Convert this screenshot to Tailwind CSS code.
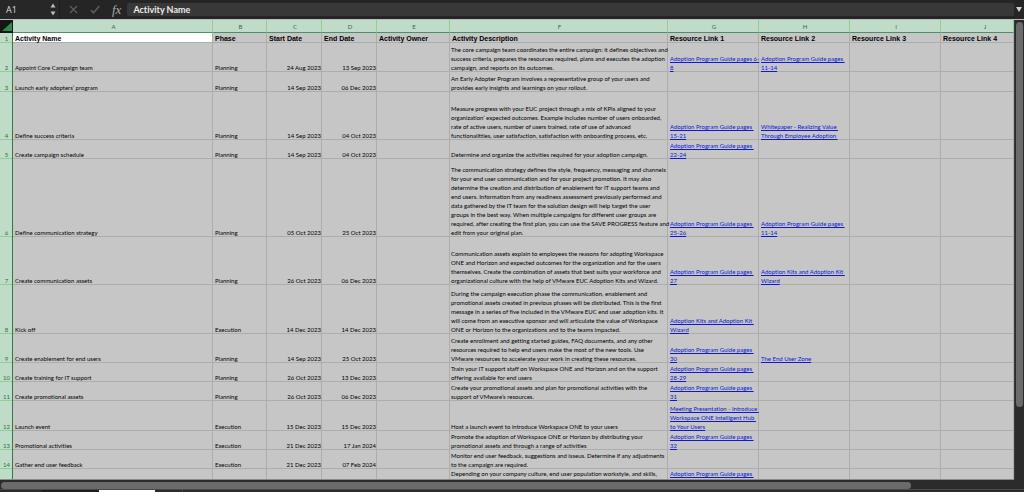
<!DOCTYPE html>
<html lang="en">
<head>
<meta charset="utf-8">
<title>Adoption campaign plan</title>
<script src="https://cdn.jsdelivr.net/npm/@tailwindcss/browser@4"></script>
</head>
<body class="flex h-screen flex-col overflow-hidden bg-[#2b2b2b] font-['Lato',sans-serif]">

<!-- Formula bar -->
<header class="flex h-[19px] shrink-0 items-center bg-[#252525]">
  <div class="flex h-full w-[60px] shrink-0 items-center justify-between border-r border-[#1d1d1d] bg-[#272727] pr-[3px] pl-1.5">
    <input aria-label="Name box" value="A1" class="h-4 w-9 bg-transparent font-['Open_Sans',sans-serif] text-[9px] text-[#dedede] outline-none">
    <button aria-label="Named ranges" class="flex h-full items-center">
      <svg class="h-[13px] w-[6px]" viewBox="0 0 6 13" fill="#bdbdbd"><path d="M3 0.5 5.5 4.5H.5ZM3 12.5 5.5 8.5H.5Z"/></svg>
    </button>
  </div>
  <div class="flex shrink-0 items-center gap-3 pr-1 pl-[9px]">
    <button aria-label="Cancel"><svg class="size-[9px]" viewBox="0 0 9 9" fill="none" stroke="#5e5e5e" stroke-width="1.3"><path d="m1 1 7 7M8 1 1 8"/></svg></button>
    <button aria-label="Enter"><svg class="h-[9px] w-[10px]" viewBox="0 0 10 9" fill="none" stroke="#5e5e5e" stroke-width="1.5"><path d="m.8 5 2.7 2.8L9.3 1"/></svg></button>
    <button aria-label="Insert function" class="font-['Liberation_Serif',serif] text-[13px] leading-4 text-[#a8a8a8] italic">fx</button>
  </div>
  <input aria-label="Formula" value="Activity Name" class="ml-0.5 h-[13px] min-w-0 flex-1 rounded-xs bg-[#383838] px-1.5 text-[9px] font-bold text-[#ececec] outline-none [font-variant-ligatures:none]">
  <button aria-label="Expand formula bar" class="flex w-2.5 shrink-0 items-center justify-center">
    <svg class="h-[5px] w-[6px]" viewBox="0 0 6 5" fill="#d0d0d0"><path d="M0 0H6L3 5Z"/></svg>
  </button>
</header>
<div class="h-px shrink-0 bg-[#bcbcbc]"></div>

<!-- Sheet -->
<main class="flex min-h-0 flex-1">
  <div class="min-w-0 flex-1 overflow-hidden border-b border-[#8a8a8a] bg-[#c6c6c6]">
    <table class="w-full table-fixed border-separate border-spacing-0 text-[6px] leading-[9px] text-black [font-variant-ligatures:none]">
      <colgroup>
        <col class="w-[13px]"><col class="w-[200px]"><col class="w-[54px]"><col class="w-[55px]"><col class="w-[55px]"><col class="w-[73px]"><col class="w-[218px]"><col class="w-[91px]"><col class="w-[91px]"><col class="w-[91px]"><col>
      </colgroup>
      <thead id="letters"></thead>
      <tbody id="rows"></tbody>
    </table>
  </div>
  <div class="w-2.5 shrink-0 border-l border-[#3a3a3a] bg-[#2b2b2b] px-px pt-0.5">
    <div class="h-[385px] rounded-full bg-[#6b6b6b]"></div>
  </div>
</main>

<!-- Horizontal scroll bar and sheet tabs -->
<footer class="shrink-0">
  <div class="h-[9px] bg-[#2b2b2b] px-px pt-0.5">
    <div class="h-[7px] w-[89%] rounded-full bg-[#6b6b6b]"></div>
  </div>
  <nav aria-label="Sheets" class="flex h-[3px] border-t border-[#4a4a4a] bg-[#2b2b2b]">
    <div class="w-[42px] bg-[#2b2b2b]"></div>
    <div class="w-[57px] bg-[#1e1e1e]"></div>
    <div class="w-14 bg-white"></div>
    <div class="w-7 border-r border-[#444]"></div>
  </nav>
</footer>

<script>
const G = 'Adoption Program Guide pages ';
const titles = ['Activity Name', 'Phase', 'Start Date', 'End Date', 'Activity Owner', 'Activity Description', 'Resource Link 1', 'Resource Link 2', 'Resource Link 3', 'Resource Link 4'];
// height class, name, phase, start, end, description lines, link 1 lines, link 2 lines
const data = [
  ['h-[29px]', 'Appoint Core Campaign team', 'Planning', '24 Aug 2023', '13 Sep 2023', ['The core campaign team coordinates the entire campaign: it defines objectives and', 'success criteria, prepares the resources required, plans and executes the adoption', 'campaign, and reports on its outcomes.'], [G + '6-', '8'], [G, '11-14']],
  ['h-[20px]', 'Launch early adopters’ program', 'Planning', '14 Sep 2023', '06 Dec 2023', ['An Early Adopter Program involves a representative group of your users and', 'provides early insights and learnings on your rollout.']],
  ['h-[48px]', 'Define success criteria', 'Planning', '14 Sep 2023', '04 Oct 2023', ['Measure progress with your EUC project through a mix of KPIs aligned to your', 'organization’ expected outcomes. Example includes number of users onboarded,', 'rate of active users, number of users trained, rate of use of advanced', 'functionalitties, user satisfaction, satisfaction with onboarding process, etc.'], [G, '15-21'], ['Whitepaper - Realizing Value ', 'Through Employee Adoption ']],
  ['h-[19px]', 'Create campaign schedule', 'Planning', '14 Sep 2023', '04 Oct 2023', ['Determine and organize the activities required for your adoption campaign.'], [G, '22-24']],
  ['h-[78px]', 'Define communication strategy', 'Planning', '05 Oct 2023', '25 Oct 2023', ['The communication strategy defines the style, frequency, messaging and channels', 'for your end user communication and for your project promotion. It may also', 'determine the creation and distribution of enablement for IT support teams and', 'end users. Information from any readiness assessment previously performed and', 'data gathered by the IT team for the solution design will help target the user', 'groups in the best way. When multiple campaigns for different user groups are', 'required, after creating the first plan, you can use the SAVE PROGRESS feature and', 'edit from your original plan.'], [G, '25-26'], [G, '11-14']],
  ['h-[48px]', 'Create communication assets', 'Planning', '26 Oct 2023', '06 Dec 2023', ['Communication assets explain to employees the reasons for adopting Workspace', 'ONE and Horizon and expected outcomes for the organization and for the users', 'themselves. Create the combination of assets that best suits your workforce and', 'organizational culture with the help of VMware EUC Adoption Kits and Wizard.'], [G, '27'], ['Adoption Kits and Adoption Kit ', 'Wizard']],
  ['h-[49px]', 'Kick off', 'Execution', '14 Dec 2023', '14 Dec 2023', ['During the campaign execution phase the communication, enablement and', 'promotional assets created in previous phases will be distributed. This is the first', 'message in a series of five included in the VMware EUC end user adoption kits. It', 'will come from an executive sponsor and will articulate the value of Workspace', 'ONE or Horizon to the organizations and to the teams impacted.'], ['Adoption Kits and Adoption Kit ', 'Wizard']],
  ['h-[29px]', 'Create enablement for end users', 'Planning', '14 Sep 2023', '25 Oct 2023', ['Create enrollment and getting started guides, FAQ documents, and any other', 'resources required to help end users make the most of the new tools. Use', 'VMware resources to accelerate your work in creating these resources.'], [G, '30'], ['The End User Zone']],
  ['h-[19px]', 'Create training for IT support', 'Planning', '26 Oct 2023', '13 Dec 2023', ['Train your IT support staff on Workspace ONE and Horizon and on the support', 'offering available for end users'], [G, '28-29']],
  ['h-[19px]', 'Create promotional assets', 'Planning', '26 Oct 2023', '06 Dec 2023', ['Create your promotional assets and plan for promotional activities with the', 'support of VMware’s resources.'], [G, '31']],
  ['h-[30px]', 'Launch event', 'Execution', '15 Dec 2023', '15 Dec 2023', ['Host a launch event to introduce Workspace ONE to your users'], ['Meeting Presentation - Introduce ', 'Workspace ONE Intelligent Hub ', 'to Your Users']],
  ['h-[19px]', 'Promotional activities', 'Execution', '21 Dec 2023', '17 Jan 2024', ['Promote the adoption of Workspace ONE or Horizon by distributing your', 'promotional assets and through a range of activities'], [G, '32']],
  ['h-[19px]', 'Gather end user feedback', 'Execution', '21 Dec 2023', '07 Feb 2024', ['Monitor end user feedback, suggestions and isseus. Determine if any adjustments', 'to the campaign are required.']],
  ['h-[19px]', '', '', '', '', ['Depending on your company culture, end user population workstyle, and skills,'], [G]],
];
const last = data.length - 1;

document.getElementById('letters').innerHTML =
  '<tr class="h-[13px]"><th aria-label="Select all" class="bg-[#161616] p-0"><svg class="ml-auto h-[10px] w-[11px]" viewBox="0 0 11 10" fill="#2f8a4c"><path d="M10 0V9H0Z"/></svg></th>' +
  [...'ABCDEFGHIJ'].map(c => `<th scope="col" class="border-r border-b border-r-[#8fcf96] border-b-[#4f8f66] bg-[#bfdcc9] py-0 pr-0 font-normal text-[#2f6b49] ${c === 'J' ? 'pl-4' : 'pl-0.5'}">${c}</th>`).join('') + '</tr>';

const rowHead = (n, v) => `<th scope="row" class="bg-[#bfdcc9] p-0 text-center font-normal text-[#2f6b49] shadow-[inset_-1px_0_0_#2f7a45,inset_0_-1px_0_#8fcf96] ${v}">${n}</th>`;
const cell = (html, v, extra) => `<td class="py-0 pr-px whitespace-pre shadow-[inset_-1px_-1px_0_#adadad] ${v} ${extra || 'pl-0.5'}">${html}</td>`;
const link = (lines) => lines ? `<a href="#" class="text-[#0b16d6] underline">${lines.join('<br>')}</a>` : '';

document.getElementById('rows').innerHTML =
  `<tr class="h-[10px] font-['Liberation_Sans',sans-serif] text-[7px] font-bold">` +
  rowHead(1, `align-bottom font-['Lato',sans-serif] text-[6px]`) +
  titles.map((t, i) => cell(t, 'align-bottom', i ? '' : 'pl-0.5 bg-white')).join('') + '</tr>' +
  data.map(([h, name, phase, start, end, desc, l1, l2], i) => {
    const v = i === last ? 'align-top' : 'align-bottom';
    return `<tr class="${h}">` + rowHead(i === last ? '' : i + 2, v) + cell(name, v) + cell(phase, v) +
      cell(start, v, 'text-right') + cell(end, v, 'text-right') + cell('', v) + cell(desc.join('<br>'), v, 'pl-px') +
      cell(link(l1), v) + cell(link(l2), v) + cell('', v) + cell('', v) + '</tr>';
  }).join('');
</script>
</body>
</html>
